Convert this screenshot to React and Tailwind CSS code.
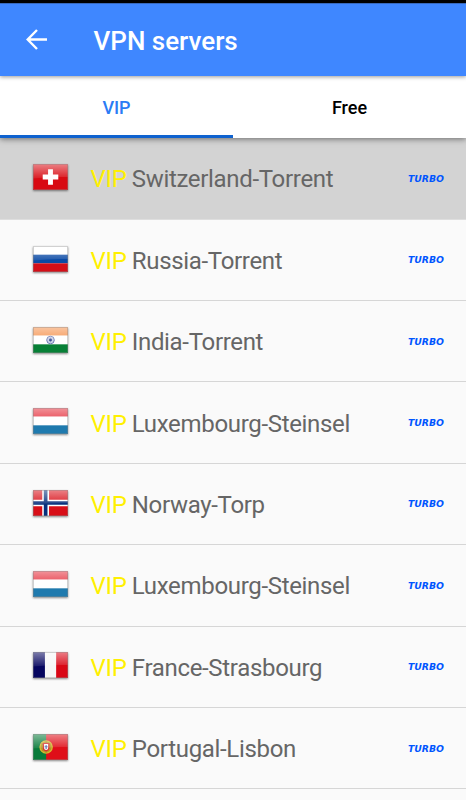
import React from 'react';

const servers = [
  ['ch', 'Switzerland-Torrent'],
  ['ru', 'Russia-Torrent'],
  ['in', 'India-Torrent'],
  ['lu', 'Luxembourg-Steinsel'],
  ['no', 'Norway-Torp'],
  ['lu', 'Luxembourg-Steinsel'],
  ['fr', 'France-Strasbourg'],
  ['pt', 'Portugal-Lisbon'],
];

function FlagArt({ code }) {
  switch (code) {
    case 'ch':
      return (
        <>
          <rect width="36" height="27" fill="#d80a12" />
          <path d="M15.5 5.5h5v5.3h5.5v5.4h-5.5v5.3h-5v-5.3H10v-5.4h5.5z" fill="#fff" />
        </>
      );
    case 'ru':
      return (
        <>
          <rect width="36" height="9" fill="#fff" />
          <rect y="9" width="36" height="9" fill="#0a4aa5" />
          <rect y="18" width="36" height="9" fill="#d40e18" />
        </>
      );
    case 'in':
      return (
        <>
          <rect width="36" height="9" fill="#f5914c" />
          <rect y="9" width="36" height="9" fill="#fff" />
          <rect y="18" width="36" height="9" fill="#078036" />
          <circle cx="18" cy="13.5" r="3.9" fill="#d5dbee" stroke="#6473b0" strokeWidth="1" />
          <path d="M18 10v7M14.5 13.5h7M15.6 11.1l4.8 4.8M20.4 11.1l-4.8 4.8" stroke="#a5afd3" strokeWidth=".5" />
          <circle cx="18" cy="13.5" r="1.5" fill="#34478f" />
        </>
      );
    case 'lu':
      return (
        <>
          <rect width="36" height="9" fill="#e5303d" />
          <rect y="9" width="36" height="9" fill="#fff" />
          <rect y="18" width="36" height="9" fill="#1f7aae" />
        </>
      );
    case 'no':
      return (
        <>
          <rect width="36" height="27" fill="#d80e17" />
          <path d="M13 0v27M0 13.5h36" stroke="#fff" strokeWidth="7" />
          <path d="M13 0v27M0 13.5h36" stroke="#08307c" strokeWidth="3.8" />
        </>
      );
    case 'fr':
      return (
        <>
          <rect width="12.3" height="27" fill="#05055f" />
          <rect x="12.3" width="11.5" height="27" fill="#f6f6f6" />
          <rect x="23.8" width="12.2" height="27" fill="#d90615" />
        </>
      );
    default:
      return (
        <>
          <rect width="36" height="27" fill="#df0e18" />
          <rect width="13.5" height="27" fill="#087b3a" />
          <circle cx="13.5" cy="13.5" r="6.3" fill="#b79b28" stroke="#d8b62e" strokeWidth="1.3" />
          <path d="M8.5 10l10 6M9 17.5l9-8M13.5 7.5v12" stroke="#a3802a" strokeWidth=".7" />
          <path d="M10.1 9.3h6.8v5.6c0 4.2-6.8 4.2-6.8 0z" fill="#d93232" />
          <path d="M11.4 10.3h4.2v4.3c0 2.7-4.2 2.7-4.2 0z" fill="#fff" />
          <path d="M13.5 11.3v4.2M12 13.2h3" stroke="#5268a8" strokeWidth="1.1" />
        </>
      );
  }
}

function Flag({ code, id }) {
  return (
    <svg
      viewBox="0 0 36 27"
      preserveAspectRatio="none"
      className="mb-[2.5px] h-[26px] w-[35px] shrink-0 shadow-[0_0.5px_2px_rgba(0,0,0,0.45)]"
      aria-hidden="true"
    >
      <defs>
        <linearGradient id={id} x1="0" y1="0" x2="0" y2="1">
          <stop offset="0" stopColor="#fff" stopOpacity=".48" />
          <stop offset="1" stopColor="#fff" stopOpacity=".08" />
        </linearGradient>
      </defs>
      <FlagArt code={code} />
      <path d="M0 0h36v13.5Q18 13 0 15z" fill={`url(#${id})`} />
      <rect x=".5" y=".5" width="35" height="26" fill="none" stroke="#888" strokeOpacity=".4" />
    </svg>
  );
}

function ServerRow({ code, name, index }) {
  return (
    <li
      className={`flex h-[81.4px] shrink-0 items-center border-b pl-[33px] pr-[22px] ${
        index === 0 ? 'border-[#dedede] bg-[#d3d3d3]' : 'border-[#d6d6d6]'
      }`}
    >
      <Flag code={code} id={`gloss-${index}`} />
      <span className="ml-[22.5px] flex-1 whitespace-nowrap pt-[2px] text-[24px] leading-7 tracking-[-0.32px] text-[#666]">
        <span className="mr-[-0.4px] text-[#fff000]">VIP</span> {name}
      </span>
      <span className="w-9 origin-left scale-x-[1.16] pt-[3px] font-['DejaVu_Sans',sans-serif] text-[8px] font-bold italic leading-none text-[#0055ff]">
        TURBO
      </span>
    </li>
  );
}

export default function App() {
  return (
    <main className="flex h-[800px] w-[466px] flex-col overflow-hidden bg-[#fafafa] font-['Roboto',sans-serif]">
      <div className="h-[3px] shrink-0 bg-black" />
      <header className="relative z-20 flex h-[73px] shrink-0 items-center border-t border-[#3769bd] bg-[#3f87ff] pl-[26px] text-white shadow-[0_1px_4px_rgba(0,0,0,0.4)]">
        <svg viewBox="0 0 21 21" className="mb-px h-[21px] w-[21px]" fill="none" stroke="currentColor" strokeWidth="2.4" aria-label="Back">
          <path d="M21 10.5H2M11 1l-9.3 9.5L11 20" />
        </svg>
        <h1 className="ml-[46.5px] pt-[2px] text-[26px] font-medium leading-8">VPN servers</h1>
      </header>
      <nav className="relative z-10 flex h-[62px] shrink-0 bg-white text-[18px] font-medium shadow-[0_1px_6px_rgba(0,0,0,0.5)]">
        <button className="w-[233px] border-b-[3px] border-[#0f62cf] pt-[3px] text-[#2b7cf5]">VIP</button>
        <button className="flex-1 pt-px text-black">Free</button>
      </nav>
      <ul className="flex flex-col pt-[0.2px]">
        {servers.map(([code, name], index) => (
          <ServerRow key={index} code={code} name={name} index={index} />
        ))}
      </ul>
    </main>
  );
}
